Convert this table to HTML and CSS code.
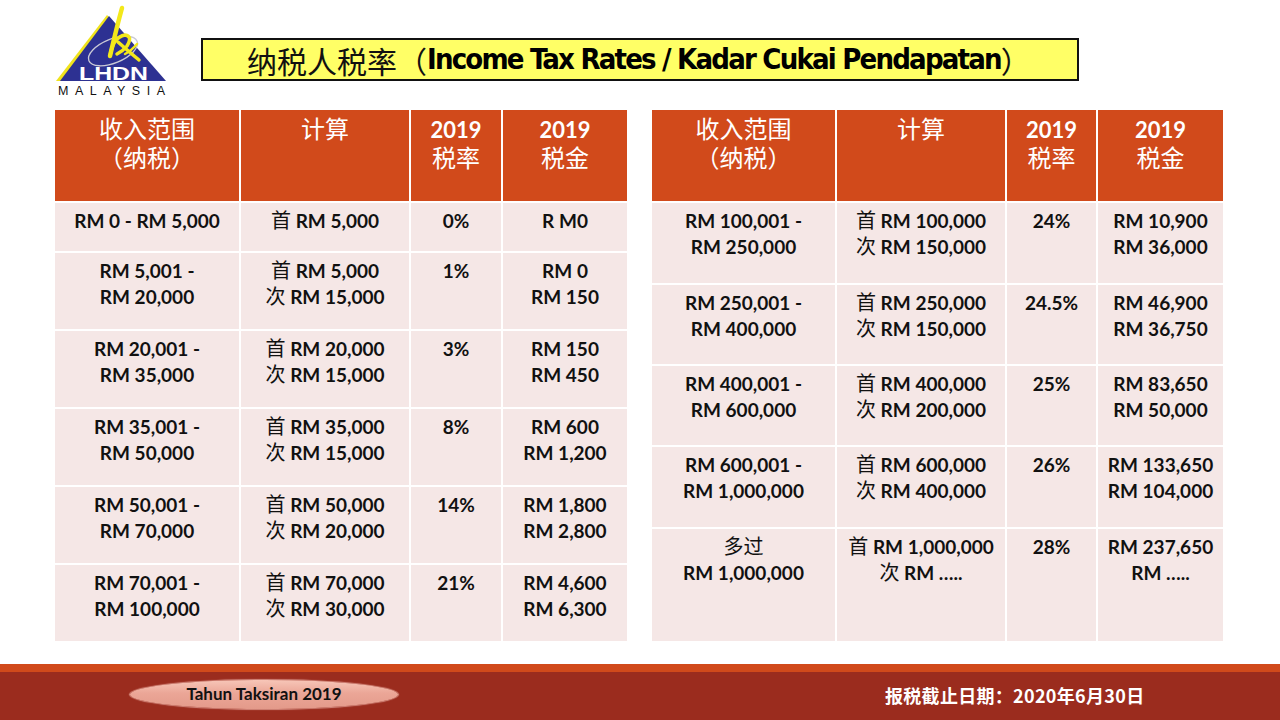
FILE: index.html
```html
<!DOCTYPE html>
<html lang="zh">
<head>
<meta charset="utf-8">
<title>Income Tax Rates</title>
<link rel="stylesheet" href="styles.css">
</head>
<body>
<div class="slide">
  <header class="top">
    <div class="logo">
      <svg width="112" height="94" viewBox="0 0 112 94" xmlns="http://www.w3.org/2000/svg">
        <polygon points="1,77 52,11 55,14 6,77" fill="#f0e31c"/>
        <polygon points="5,77 54,12 111,77" fill="#2d3192"/>
        <ellipse cx="58" cy="47" rx="26" ry="12" transform="rotate(-22 58 47)" fill="none" stroke="#c9c9d6" stroke-width="1.3"/>
        <path d="M67 4 Q62 22 55 52" fill="none" stroke="#f3e81a" stroke-width="4.5" stroke-linecap="round"/>
        <path d="M55 52 Q58 33 70 31 Q78 32 72 42 Q68 47 62 50" fill="none" stroke="#f3e81a" stroke-width="3.5" stroke-linecap="round"/>
        <path d="M63 38 Q72 46 84 56" fill="none" stroke="#f3e81a" stroke-width="3.5" stroke-linecap="round"/>
        <path d="M70 50 Q76 47 82 40" fill="none" stroke="#f3e81a" stroke-width="2.5" stroke-linecap="round"/>
        <text x="24" y="76" class="lhdn" textLength="69" lengthAdjust="spacingAndGlyphs">LHDN</text>
        <text x="3" y="91" class="mys" textLength="107" lengthAdjust="spacing">MALAYSIA</text>
      </svg>
    </div>
    <div class="title">
      <span class="title-zh">纳税人税率（</span><span class="title-en">Income Tax Rates / Kadar Cukai Pendapatan</span><span class="title-zh">）</span>
    </div>
  </header>

  <main class="tables">
    <div class="tbl tbl-left">
      <div class="th"><span class="hz">收入范围</span><br><span class="hz">（纳税）</span></div>
      <div class="th"><span class="hz">计算</span></div>
      <div class="th">2019<br><span class="hz">税率</span></div>
      <div class="th">2019<br><span class="hz">税金</span></div>

      <div class="td">RM 0 - RM 5,000</div>
      <div class="td"><span class="zh">首</span> RM 5,000</div>
      <div class="td">0%</div>
      <div class="td">R M0</div>

      <div class="td">RM 5,001 -<br>RM 20,000</div>
      <div class="td"><span class="zh">首</span> RM 5,000<br><span class="zh">次</span> RM 15,000</div>
      <div class="td">1%</div>
      <div class="td">RM 0<br>RM 150</div>

      <div class="td">RM 20,001 -<br>RM 35,000</div>
      <div class="td"><span class="zh">首</span> RM 20,000<br><span class="zh">次</span> RM 15,000</div>
      <div class="td">3%</div>
      <div class="td">RM 150<br>RM 450</div>

      <div class="td">RM 35,001 -<br>RM 50,000</div>
      <div class="td"><span class="zh">首</span> RM 35,000<br><span class="zh">次</span> RM 15,000</div>
      <div class="td">8%</div>
      <div class="td">RM 600<br>RM 1,200</div>

      <div class="td">RM 50,001 -<br>RM 70,000</div>
      <div class="td"><span class="zh">首</span> RM 50,000<br><span class="zh">次</span> RM 20,000</div>
      <div class="td">14%</div>
      <div class="td">RM 1,800<br>RM 2,800</div>

      <div class="td">RM 70,001 -<br>RM 100,000</div>
      <div class="td"><span class="zh">首</span> RM 70,000<br><span class="zh">次</span> RM 30,000</div>
      <div class="td">21%</div>
      <div class="td">RM 4,600<br>RM 6,300</div>
    </div>

    <div class="tbl tbl-right">
      <div class="th"><span class="hz">收入范围</span><br><span class="hz">（纳税）</span></div>
      <div class="th"><span class="hz">计算</span></div>
      <div class="th">2019<br><span class="hz">税率</span></div>
      <div class="th">2019<br><span class="hz">税金</span></div>

      <div class="td">RM 100,001 -<br>RM 250,000</div>
      <div class="td"><span class="zh">首</span> RM 100,000<br><span class="zh">次</span> RM 150,000</div>
      <div class="td">24%</div>
      <div class="td">RM 10,900<br>RM 36,000</div>

      <div class="td">RM 250,001 -<br>RM 400,000</div>
      <div class="td"><span class="zh">首</span> RM 250,000<br><span class="zh">次</span> RM 150,000</div>
      <div class="td">24.5%</div>
      <div class="td">RM 46,900<br>RM 36,750</div>

      <div class="td">RM 400,001 -<br>RM 600,000</div>
      <div class="td"><span class="zh">首</span> RM 400,000<br><span class="zh">次</span> RM 200,000</div>
      <div class="td">25%</div>
      <div class="td">RM 83,650<br>RM 50,000</div>

      <div class="td">RM 600,001 -<br>RM 1,000,000</div>
      <div class="td"><span class="zh">首</span> RM 600,000<br><span class="zh">次</span> RM 400,000</div>
      <div class="td">26%</div>
      <div class="td">RM 133,650<br>RM 104,000</div>

      <div class="td"><span class="zh">多过</span><br>RM 1,000,000</div>
      <div class="td"><span class="zh">首</span> RM 1,000,000<br><span class="zh">次</span> RM …..</div>
      <div class="td">28%</div>
      <div class="td">RM 237,650<br>RM …..</div>
    </div>
  </main>

  <footer class="foot">
    <div class="pill">Tahun Taksiran 2019</div>
    <div class="deadline">报税截止日期：2020年6月30日</div>
  </footer>
</div>
</body>
</html>
```
FILE: styles.css
```css
* { box-sizing: border-box; }
html, body { margin: 0; padding: 0; background: #fff; }
.slide {
  width: 1280px;
  height: 720px;
  display: flex;
  flex-direction: column;
  overflow: hidden;
  font-family: Lato, "Noto Sans", "Noto Sans CJK SC", sans-serif;
}
.top {
  height: 110px;
  display: flex;
  align-items: flex-start;
  padding-left: 55px;
}
.logo { margin-top: 4px; width: 112px; height: 94px; }
.logo svg { display: block; }
.lhdn { font-family: "Liberation Sans", Arial, sans-serif; font-weight: 700; font-size: 19px; fill: #fff; }
.mys { font-family: "Liberation Sans", Arial, sans-serif; font-size: 12.5px; fill: #111; }
.title {
  margin-left: 34px;
  margin-top: 38px;
  width: 878px;
  height: 43px;
  background: #ffff66;
  border: 2px solid #111;
  display: flex;
  align-items: center;
  padding-left: 44px;
  white-space: nowrap;
}
.title-zh {
  font-family: "Noto Sans CJK SC", sans-serif;
  font-size: 30px;
  line-height: 1;
  font-weight: 400;
  color: #111;
}
.title-en {
  font-family: "DejaVu Sans Condensed", "DejaVu Sans", sans-serif;
  font-stretch: condensed;
  font-weight: 700;
  font-size: 29px;
  line-height: 1;
  letter-spacing: -1.8px;
  color: #000;
}
.tables {
  display: flex;
  gap: 25px;
  padding-left: 55px;
  height: 531px;
}
.tbl {
  display: grid;
  gap: 2px;
  background: #fff;
}
.tbl-left {
  width: 572px;
  grid-template-columns: 184px 168px 90px 124px;
  grid-template-rows: 91px 48px repeat(5, 76px);
}
.tbl-right {
  width: 571px;
  grid-template-columns: 183px 168px 89px 125px;
  grid-template-rows: 91px 80px 79px 79px 80px 112px;
}
.th {
  background: #d14a1b;
  color: #fff;
  text-align: center;
  padding-top: 5px;
  font-size: 22px;
  line-height: 29px;
  font-weight: 700;
  font-family: Lato, "Noto Sans CJK SC", sans-serif;
}
.hz {
  font-family: "Noto Sans CJK SC", sans-serif;
  font-weight: 400;
  font-size: 24px;
  line-height: 0;
}
.td {
  background: #f5e7e6;
  color: #111;
  text-align: center;
  padding-top: 5px;
  font-size: 19px;
  line-height: 26px;
  font-weight: 700;
  white-space: nowrap;
}
.zh {
  font-family: "Noto Sans CJK SC", sans-serif;
  font-weight: 400;
  font-size: 20px;
  line-height: 0;
}
.foot {
  margin-top: 23px;
  flex: 1;
  border-top: 8px solid #d14a1b;
  background: #9b2c1e;
  display: flex;
  align-items: center;
  padding-left: 130px;
}
.pill {
  width: 268px;
  height: 29px;
  border-radius: 50%;
  background: linear-gradient(180deg, #f7c6b8 0%, #eba697 45%, #e39a8a 100%);
  box-shadow: 0 0 1px 1px rgba(250, 200, 190, 0.6);
  text-align: center;
  font-family: Lato, sans-serif;
  font-weight: 700;
  font-size: 17px;
  line-height: 28px;
  color: #111;
  margin-top: -4px;
}
.deadline {
  margin-left: 487px;
  color: #fff;
  font-family: "Noto Sans CJK SC", sans-serif;
  font-weight: 700;
  font-size: 18px;
  letter-spacing: 0.3px;
  margin-top: -2px;
  white-space: nowrap;
}
```
